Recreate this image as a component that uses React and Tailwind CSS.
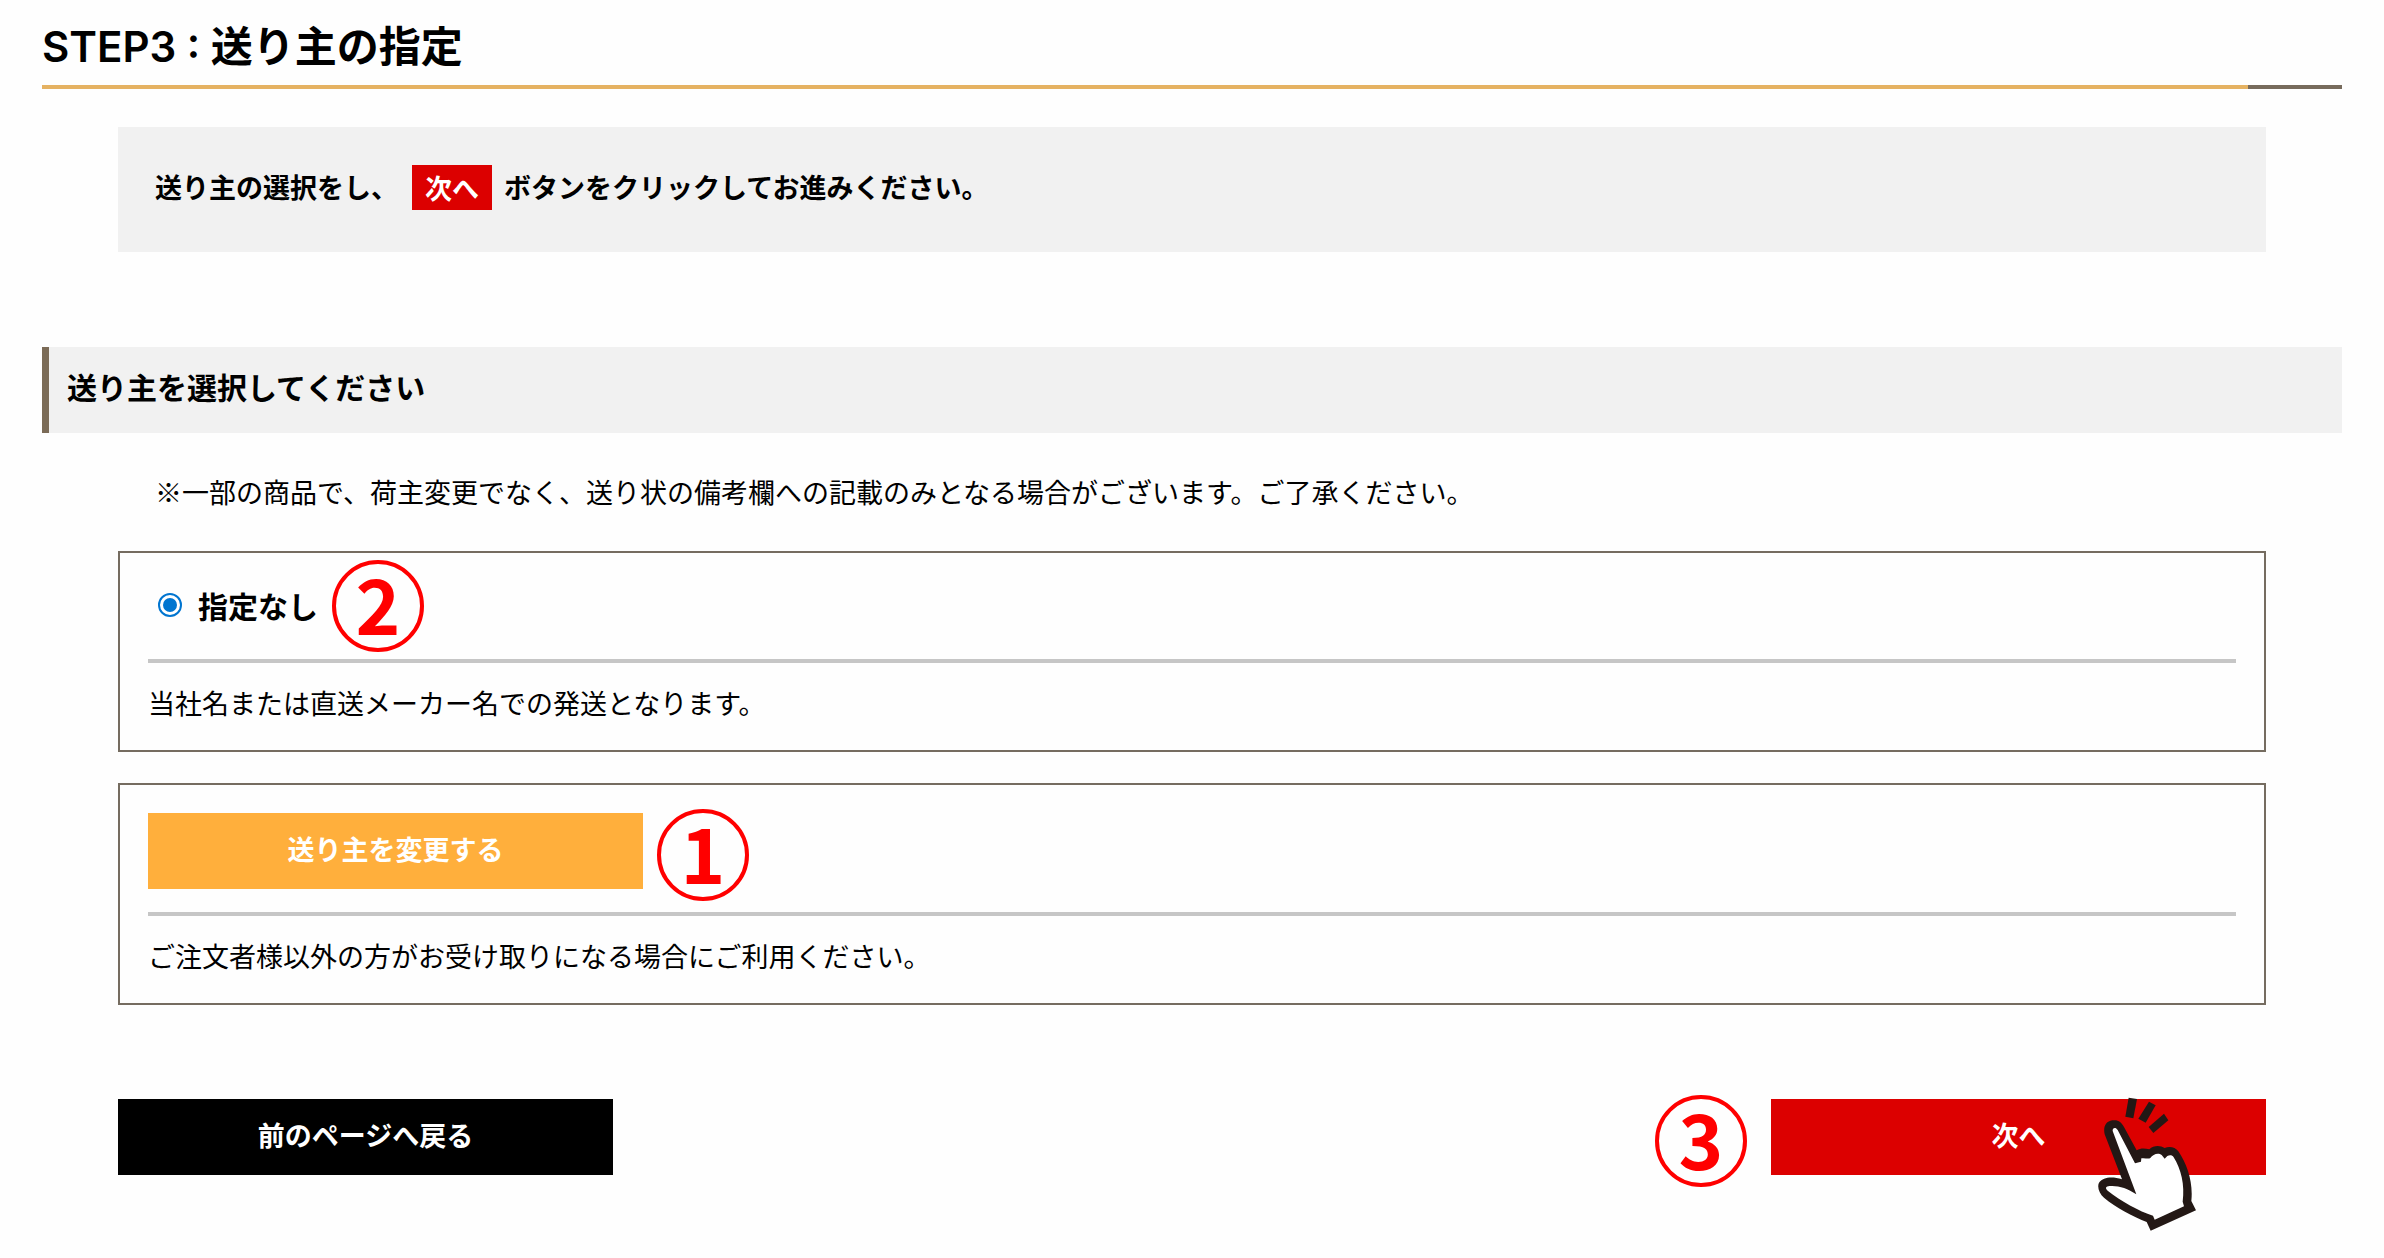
import { useState } from 'react';

const StepMark = ({ number, className = '' }) => (
  <span
    className={`flex h-[92px] w-[92px] shrink-0 items-center justify-center rounded-full border-4 border-[#ff0000] pb-2 text-[76px] leading-none font-bold text-[#ff0000] ${className}`}
  >
    {number}
  </span>
);

const ClickHand = () => (
  <svg
    viewBox="144 78 300 402"
    aria-hidden="true"
    className="pointer-events-none absolute -top-0.5 right-[69px] h-[134px] w-[100px]"
  >
    <g fill="#231815">
      <path d="M239 80L264 84L253 142L229 137Z" />
      <path d="M300 92L320 103L290 155L268 143Z" />
      <path d="M345 128L358 148L313 186L299 168Z" />
      <path d="M167 190C162 168 170 151 190 148C207 145 217 153 225 168L263 238C275 231 287 232 301 235C313 223 333 222 347 231C361 225 379 228 388 241C415 280 433 335 427 390L441 418L305 479L293 453C255 438 200 410 165 380C150 367 143 345 151 334C162 318 190 315 219 325Z" />
    </g>
    <path
      fill="#fff"
      d="M191 180C190 170 200 167 206 177L258 277L276 272L277 262C288 260 298 265 304 261C312 249 328 244 338 252L347 263L355 255C362 252 370 252 374 259C396 294 408 342 401 392L405 406L317 446L312 434C270 421 215 390 177 360C167 351 170 346 182 345C207 343 235 351 262 370Z"
    />
  </svg>
);

const Panel = ({ head, headClass, children }) => (
  <div className="border-2 border-[#756c60] px-7 pb-[27px]">
    <div className={`mb-5 flex border-b-4 border-[#c6c6c6] ${headClass}`}>{head}</div>
    <p className="text-[27px] leading-10">{children}</p>
  </div>
);

const buttonClass = 'h-[76px] w-[495px] pb-1 text-[27px] font-bold text-white';

const App = () => {
  const [sender, setSender] = useState('none');

  return (
    <main className="min-h-screen bg-[#fefefe] px-[42px] pt-3.5 pb-20 font-['Noto_Sans_CJK_JP',sans-serif] text-black">
      <h1 className="h-[71px] text-[42px] leading-[60px] font-bold">
        <span className="font-['Inter',sans-serif] font-semibold">STEP3 : </span>
        送り主の指定
      </h1>
      <div className="flex h-1">
        <div className="grow bg-[#e5b262]" />
        <div className="w-[94px] bg-[#776b5c]" />
      </div>

      <div className="mx-[76px] mt-[38px] flex h-[125px] items-center bg-[#f1f1f1] px-[37px] pb-1 text-[27px] font-bold">
        <span>送り主の選択をし、</span>
        <span className="mr-3 ml-3.5 bg-[#dc0000] px-[13px] leading-[45px] text-white">次へ</span>
        <span>ボタンをクリックしてお進みください。</span>
      </div>

      <h2 className="mt-[95px] flex h-[86px] items-center border-l-[7px] border-[#7b6b57] bg-[#f1f1f1] pb-2 pl-[18px] text-[30px] font-bold">
        送り主を選択してください
      </h2>

      <div className="mx-[76px]">
        <p className="mt-[39px] px-[37px] text-[27px] leading-10">
          ※一部の商品で、荷主変更でなく、送り状の備考欄への記載のみとなる場合がございます。ご了承ください。
        </p>

        <div className="mt-[39px] flex flex-col gap-[31px]">
          <Panel
            headClass="h-[110px] items-center"
            head={
              <>
                <label className="flex items-center gap-4 pb-0.5 pl-[10px] text-[30px] font-bold">
                  <input
                    type="radio"
                    name="sender"
                    value="none"
                    checked={sender === 'none'}
                    onChange={() => setSender('none')}
                    className="h-6 w-6 appearance-none rounded-full border-2 border-[#0075d0] bg-white p-[3px] before:block before:h-full before:w-full before:rounded-full checked:before:bg-[#0075d0]"
                  />
                  指定なし
                </label>
                <StepMark number={2} className="ml-3.5" />
              </>
            }
          >
            当社名または直送メーカー名での発送となります。
          </Panel>

          <Panel
            headClass="h-[131px] items-start pt-7"
            head={
              <div className="relative">
                <button type="button" onClick={() => setSender('other')} className={`${buttonClass} bg-[#ffaf3c]`}>
                  送り主を変更する
                </button>
                <StepMark number={1} className="absolute -top-1 left-full ml-3.5" />
              </div>
            }
          >
            ご注文者様以外の方がお受け取りになる場合にご利用ください。
          </Panel>
        </div>

        <div className="mt-[94px] flex justify-between">
          <button type="button" className={`${buttonClass} bg-black`}>
            前のページへ戻る
          </button>
          <div className="relative">
            <StepMark number={3} className="absolute -top-1 right-full mr-6" />
            <button type="button" className={`${buttonClass} bg-[#dc0000]`}>
              次へ
            </button>
            <ClickHand />
          </div>
        </div>
      </div>
    </main>
  );
};

export default App;
